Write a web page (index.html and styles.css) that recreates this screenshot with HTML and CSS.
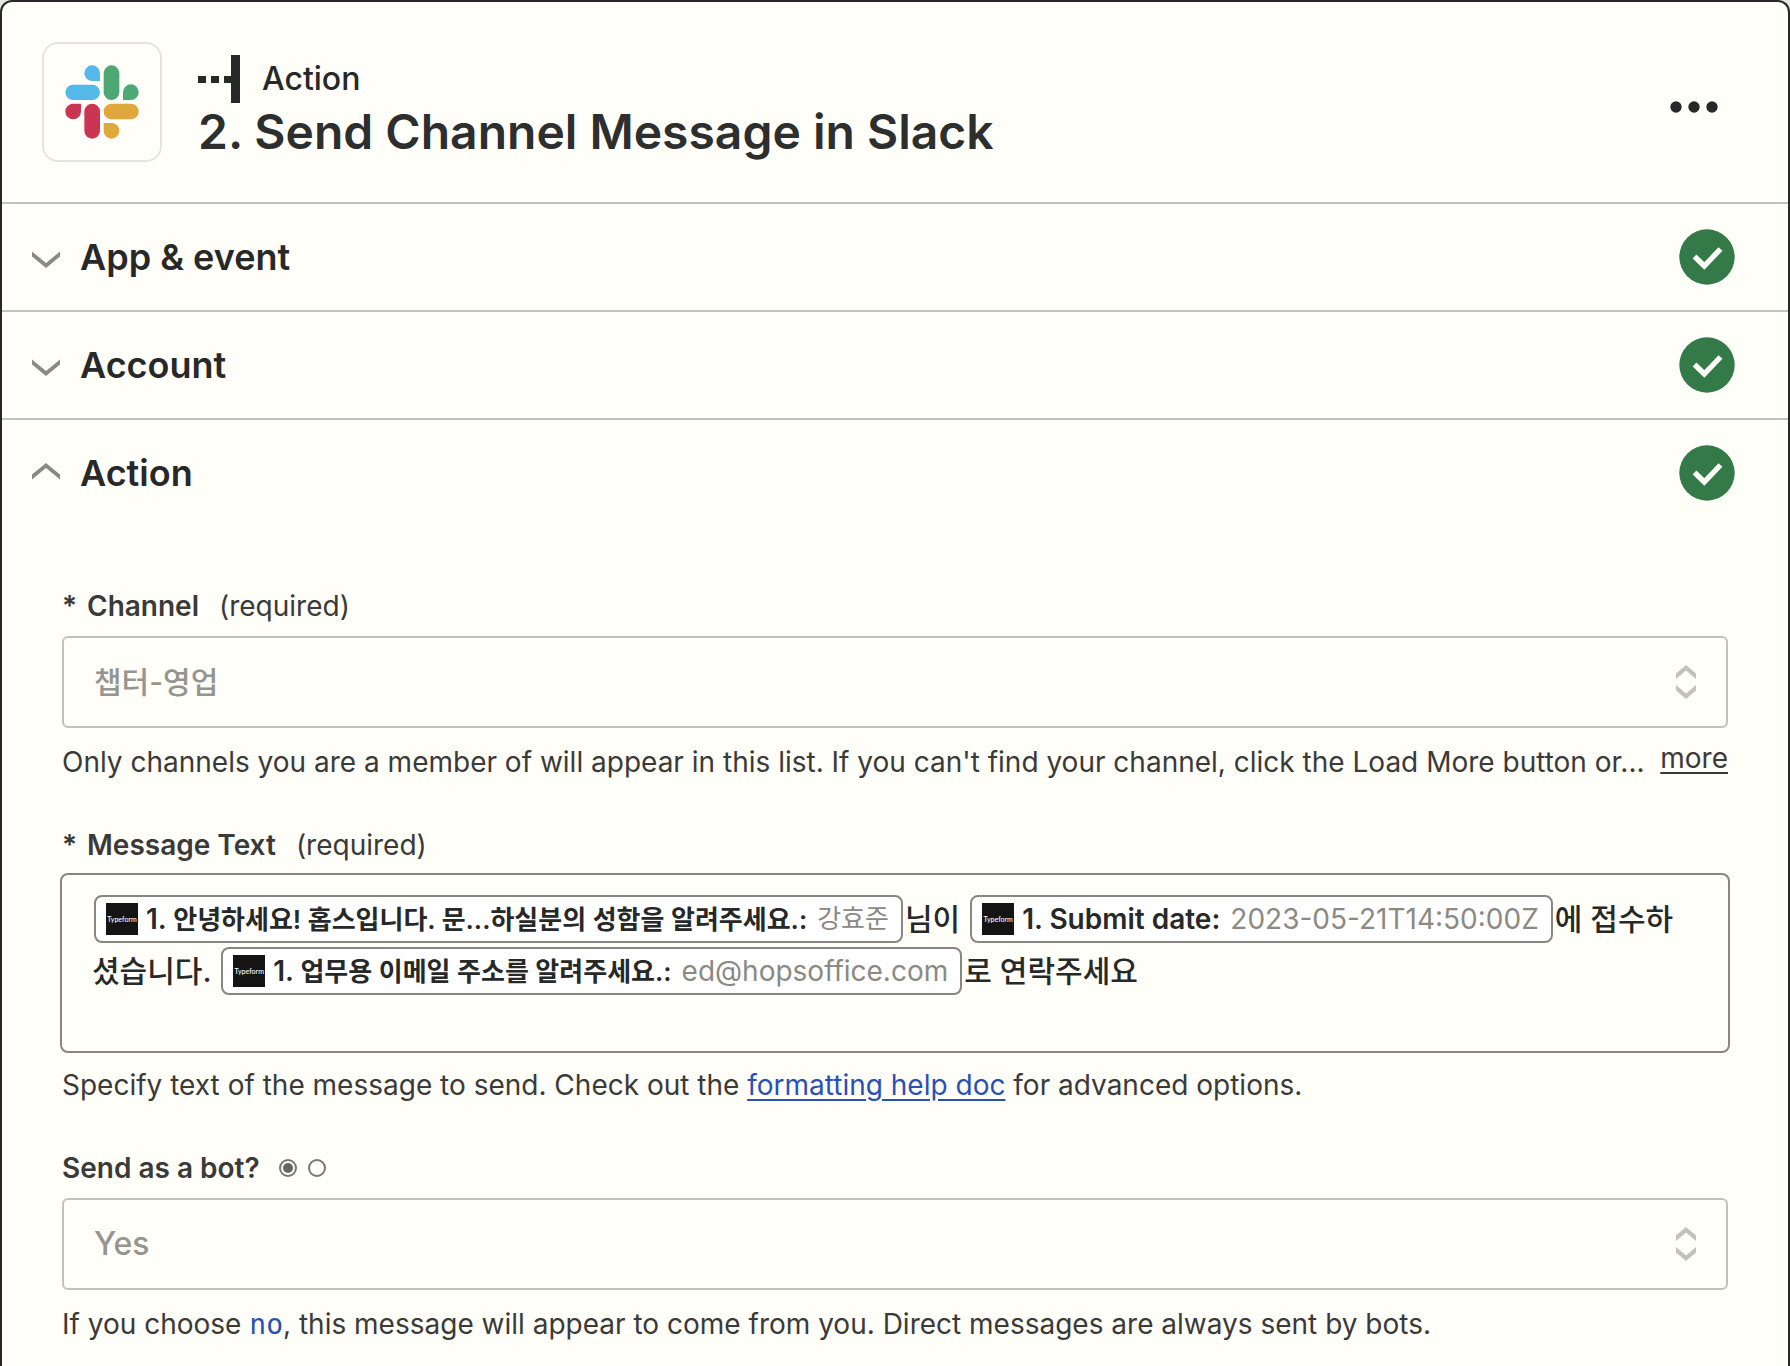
FILE: index.html
```html
<!DOCTYPE html>
<html lang="en">
<head>
<meta charset="utf-8">
<meta name="viewport" content="width=device-width, initial-scale=1">
<title>Send Channel Message in Slack</title>
<link rel="stylesheet" href="styles.css">
</head>
<body>
<svg class="defs" aria-hidden="true">
  <symbol id="check" viewBox="0 0 56 56">
    <circle cx="28" cy="28" r="27.700" fill="#337a48"/>
    <path d="M15.500 27.500 25.300 37 41.500 20" fill="none" stroke="#fffef9" stroke-width="5.400"/>
  </symbol>
  <symbol id="chevron" viewBox="0 0 28 21">
    <path d="M0 4.500 14 16 28 4.500V9.500L14 21 0 9.500Z" fill="currentColor"/>
  </symbol>
  <symbol id="updown" viewBox="0 0 20 34">
    <path d="M0 8.500 10 0 20 8.500V14L10 5.500 0 14ZM0 20 10 28.500 20 20V25.500L10 34 0 25.500Z" fill="currentColor"/>
  </symbol>
</svg>
<main class="card">
  <header class="card-header">
    <div class="app-icon">
      <svg class="slack" viewBox="195 195 222 222" role="img" aria-label="Slack">
        <g fill="#54b9e9"><path d="M300 243h-23.500a23.500 23.500 0 1 1 23.500-23.500z"/><rect x="196" y="254" width="104" height="46" rx="23"/></g>
        <g fill="#4ea874"><rect x="311" y="196" width="47" height="104" rx="23.500"/><path d="M369 300v-23.500a23.500 23.500 0 1 1 23.500 23.500z"/></g>
        <g fill="#ca3553"><path d="M243 311v23.500a23.500 23.500 0 1 1-23.500-23.500z"/><rect x="253" y="311" width="47" height="105" rx="23.500"/></g>
        <g fill="#e0a73c"><rect x="311" y="311" width="105" height="47" rx="23.500"/><path d="M311 369h23.500a23.500 23.500 0 1 1-23.500 23.500z"/></g>
      </svg>
    </div>
    <div class="heading">
      <p class="step-type">
        <svg class="step-icon" viewBox="0 0 42 48" aria-hidden="true"><path d="M33 0h9v48h-9V28h-7v-7h7zM0 21h8v7H0zM13 21h8v7h-8z" fill="currentColor"/></svg>
        Action
      </p>
      <h1 class="title">2. Send Channel Message in Slack</h1>
    </div>
    <button class="menu-button" type="button" aria-label="More options">
      <svg class="dots" viewBox="0 0 48 12"><circle cx="6" cy="6" r="5.700"/><circle cx="24" cy="6" r="5.700"/><circle cx="42" cy="6" r="5.700"/></svg>
    </button>
  </header>

  <button class="section-row" type="button" aria-expanded="false">
    <svg class="chevron"><use href="#chevron"/></svg>
    <span class="section-name">App &amp; event</span>
    <svg class="check"><use href="#check"/></svg>
  </button>
  <button class="section-row" type="button" aria-expanded="false">
    <svg class="chevron"><use href="#chevron"/></svg>
    <span class="section-name">Account</span>
    <svg class="check"><use href="#check"/></svg>
  </button>
  <button class="section-row" type="button" aria-expanded="true">
    <svg class="chevron chevron-up"><use href="#chevron"/></svg>
    <span class="section-name">Action</span>
    <svg class="check"><use href="#check"/></svg>
  </button>

  <form class="fields">
    <div class="field">
      <label class="label" for="channel"><span class="star">*</span><strong>Channel</strong><span class="required">(required)</span></label>
      <div class="select-box">
        <select class="select select-ko" id="channel"><option lang="ko">챕터-영업</option></select>
        <svg class="updown" aria-hidden="true"><use href="#updown"/></svg>
      </div>
      <div class="help-row">
        <p class="help">Only channels you are a member of will appear in this list. If you can't find your channel, click the Load More button or...</p>
        <a class="more" href="#more">more</a>
      </div>
    </div>

    <div class="field">
      <div class="label" id="message-label"><span class="star">*</span><strong>Message Text</strong><span class="required">(required)</span></div>
      <div class="editor" role="textbox" aria-multiline="true" aria-labelledby="message-label" contenteditable="true" spellcheck="false" lang="ko"><span class="pill" contenteditable="false"><span class="typeform">Typeform</span><b>1. <span class="ko">안녕하세요! 홉스입니다. 문...하실분의 성함을 알려주세요.:</span></b><span class="value ko">강효준</span></span>님이 <span class="pill" contenteditable="false"><span class="typeform">Typeform</span><b>1. Submit date:</b><span class="value">2023-05-21T14:50:00Z</span></span>에 접수하셨습니다. <span class="pill" contenteditable="false"><span class="typeform">Typeform</span><b>1. <span class="ko">업무용 이메일 주소를 알려주세요.:</span></b><span class="value">ed@hopsoffice.com</span></span>로 연락주세요</div>
      <p class="help">Specify text of the message to send. Check out the <a class="doc-link" href="#formatting">formatting help doc</a> for advanced options.</p>
    </div>

    <div class="field">
      <div class="label">
        <label for="bot"><strong>Send as a bot?</strong></label>
        <span class="radios">
          <input class="radio" type="radio" name="mode" aria-label="Choose from list" checked>
          <input class="radio" type="radio" name="mode" aria-label="Custom value">
        </span>
      </div>
      <div class="select-box">
        <select class="select" id="bot"><option>Yes</option></select>
        <svg class="updown" aria-hidden="true"><use href="#updown"/></svg>
      </div>
      <p class="help">If you choose <code class="code">no</code>, this message will appear to come from you. Direct messages are always sent by bots.</p>
    </div>
  </form>
</main>
</body>
</html>
```
FILE: styles.css
```css
* {
  box-sizing: border-box;
}

body {
  margin: 0;
  background: #e6e6e4;
  color: #2b2b2a;
  font-family: Inter, "Noto Sans CJK KR", sans-serif;
  font-size: 28px;
  line-height: 40px;
}

p,
h1 {
  margin: 0;
}

button {
  font: inherit;
  color: inherit;
  background: none;
  border: 0;
  padding: 0;
}

svg {
  display: block;
  flex: none;
}

.defs {
  position: absolute;
  width: 0;
  height: 0;
}

.card {
  min-height: 100vh;
  background: #fffef9;
  border: 2px solid #272928;
  border-bottom: 0;
  border-radius: 12px 12px 0 0;
}

.card-header {
  display: flex;
  align-items: center;
  padding: 40px 62px 40px 40px;
}

.app-icon {
  display: grid;
  place-items: center;
  width: 120px;
  height: 120px;
  border: 2px solid #e5e4e0;
  border-radius: 16px;
}

.slack {
  width: 74px;
  height: 74px;
}

.heading {
  flex: 1;
  padding: 12px 0 0 36px;
}

.step-type {
  display: flex;
  align-items: center;
  gap: 22px;
  font-size: 32px;
  line-height: 48px;
  font-weight: 500;
  color: #272928;
}

.step-icon {
  width: 42px;
  height: 48px;
}

.title {
  font-size: 48px;
  line-height: 58px;
  font-weight: 600;
  color: #2d2e2e;
}

.menu-button {
  padding: 26px 8px 16px;
}

.dots {
  width: 48px;
  height: 12px;
  fill: #272928;
}

.section-row {
  display: flex;
  align-items: center;
  width: 100%;
  height: 108px;
  padding: 0 53px 0 30px;
  border-top: 2px solid #c3c2c0;
  text-align: left;
}

.chevron {
  width: 28px;
  height: 21px;
  color: #8b8983;
}

.chevron-up {
  transform: rotate(180deg);
}

.section-name {
  flex: 1;
  padding-left: 20px;
  font-size: 36px;
  font-weight: 600;
  color: #272928;
}

.check {
  width: 56px;
  height: 56px;
}

.fields {
  display: flex;
  flex-direction: column;
  gap: 43px;
  padding: 60px 60px 24px;
  color: #3a3a38;
}

.label {
  display: flex;
  align-items: center;
}

.label strong {
  font-weight: 600;
}

.star {
  width: 25px;
  font-weight: 600;
}

.required {
  padding-left: 20px;
}

.select-box {
  display: grid;
  align-items: center;
  margin: 10px 0 14px;
}

.select,
.updown {
  grid-area: 1 / 1;
}

.select {
  appearance: none;
  width: 100%;
  height: 92px;
  padding: 0 80px 0 30px;
  border: 2px solid #c2c1bc;
  border-radius: 6px;
  background: transparent;
  color: #95958f;
  font: inherit;
  font-size: 32px;
  font-weight: 500;
}

.select-ko {
  font-size: 30px;
}

.updown {
  justify-self: end;
  width: 20px;
  height: 34px;
  margin-right: 32px;
  color: #c2c1bc;
  pointer-events: none;
}

.help-row {
  display: flex;
  align-items: flex-start;
  justify-content: space-between;
  gap: 8px;
}

.more {
  line-height: 32px;
  color: inherit;
  text-underline-offset: 4px;
}

.editor {
  min-height: 180px;
  margin: 8px -2px 12px;
  padding: 18px 40px 18px 30px;
  border: 2px solid #888681;
  border-radius: 8px;
  color: #272928;
  font-size: 30px;
  line-height: 52px;
  font-weight: 500;
  word-break: break-all;
}

.pill {
  display: inline-flex;
  align-items: center;
  height: 48px;
  margin: 2px;
  padding: 0 12px 0 10px;
  border: 2px solid #888681;
  border-radius: 8px;
  background: #fff;
  font-size: 28px;
  line-height: 44px;
  vertical-align: top;
  white-space: nowrap;
}

.pill b {
  font-weight: 600;
}

.ko {
  font-size: 26px;
}

.typeform {
  display: grid;
  place-items: center;
  width: 32px;
  height: 32px;
  margin-right: 8px;
  background: #141414;
  color: #fff;
  font-family: Lato, sans-serif;
  font-size: 7px;
  line-height: 8px;
}

.pill .value {
  padding-left: 10px;
  color: #8b8983;
  font-weight: 400;
}

.doc-link {
  color: #2b50b5;
  text-underline-offset: 4px;
}

.radios {
  display: flex;
  gap: 11px;
  padding-left: 19px;
}

.radio {
  appearance: none;
  display: grid;
  place-items: center;
  width: 18px;
  height: 18px;
  margin: 0;
  border: 2px solid #777;
  border-radius: 50%;
}

.radio:checked::before {
  content: "";
  width: 10px;
  height: 10px;
  border-radius: 50%;
  background: #666;
}

.code {
  color: #2b50b5;
  font-family: "DejaVu Sans Mono", monospace;
  font-size: 28px;
  line-height: 1;
}
```
